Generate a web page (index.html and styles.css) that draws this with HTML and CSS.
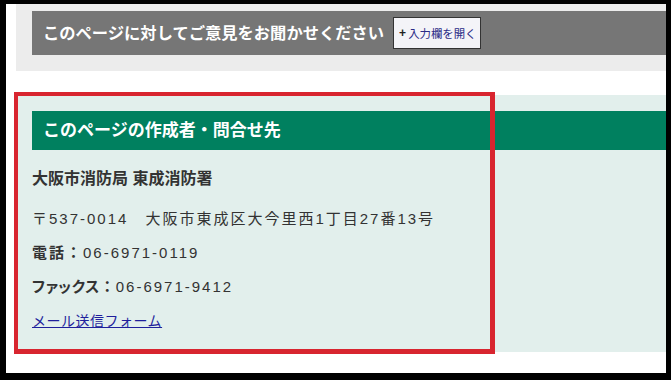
FILE: index.html
```html
<!DOCTYPE html>
<html lang="ja">
<head>
<meta charset="utf-8">
<title>このページの作成者・問合せ先</title>
<link rel="stylesheet" href="styles.css">
</head>
<body>
<div class="frame">
  <section class="feedback">
    <div class="feedback-bar">
      <h2 class="feedback-title">このページに対してご意見をお聞かせください</h2>
      <button class="open-btn" type="button"><span class="plus">+</span>入力欄を開く</button>
    </div>
  </section>

  <section class="contact">
    <h2 class="contact-head">このページの作成者・問合せ先</h2>
    <div class="contact-body">
      <p class="org">大阪市消防局 東成消防署</p>
      <p class="line">〒537-0014　大阪市東成区大今里西1丁目27番13号</p>
      <p class="line"><strong class="label">電話：</strong>06-6971-0119</p>
      <p class="line"><strong class="label"><span class="kana">ファックス</span><span class="colon">：</span></strong>06-6971-9412</p>
      <p class="line"><a class="mail" href="#">メール送信フォーム</a></p>
    </div>
  </section>

  <div class="highlight"></div>
</div>
</body>
</html>
```

FILE: styles.css
```css
html, body {
  margin: 0;
  padding: 0;
  height: 380px;
  overflow: hidden;
}

body {
  background: #000;
  font-family: "Liberation Sans", "Noto Sans CJK JP", sans-serif;
  color: #333;
}

.frame {
  position: relative;
  margin: 4px 5px 7px 6px;
  height: 369px;
  background: #fff;
  display: flex;
  flex-direction: column;
}

.feedback {
  margin-left: 10px;
  background: #ececec;
  padding: 7px 0 16px 16px;
}

.feedback-bar {
  height: 44px;
  background: #767676;
  display: flex;
  align-items: center;
  gap: 9px;
  padding-left: 11px;
}

.feedback-title {
  margin: 0;
  color: #fff;
  font-size: 16.3px;
  font-weight: bold;
  line-height: 1;
  white-space: nowrap;
}

.open-btn {
  height: 32px;
  width: 88px;
  box-sizing: border-box;
  margin: 0;
  padding: 0 0 0 5px;
  border: 1px solid #333;
  background: #f4f4f8;
  color: #2b2b86;
  font-family: "Liberation Sans", "Noto Sans CJK JP", sans-serif;
  font-size: 11.4px;
  text-align: left;
  white-space: nowrap;
  display: flex;
  align-items: center;
}

.plus {
  color: #222;
  font-weight: bold;
  font-size: 12px;
  margin-right: 2px;
}

.contact {
  margin: 24px 0 0 10px;
  height: 257px;
  box-sizing: border-box;
  background: #e2efec;
  padding: 16px 0 0 16px;
}

.contact-head {
  margin: 0;
  height: 39px;
  background: #00805f;
  color: #fff;
  font-size: 17px;
  font-weight: bold;
  line-height: 39px;
  padding-left: 11px;
}

.contact-body {
  display: flex;
  flex-direction: column;
  gap: 10px;
  padding-top: 17px;
}

.contact-body p {
  margin: 0;
  line-height: 24px;
}

.org {
  font-size: 16px;
  font-weight: bold;
  margin-bottom: 6px !important;
}

.line {
  font-size: 15px;
  letter-spacing: 2px;
}

.label {
  font-weight: bold;
}

.kana {
  font-feature-settings: "palt";
  letter-spacing: 0.5px;
}

.colon {
  letter-spacing: 1px;
}

.mail {
  color: #1f1f9c;
  font-size: 14px;
  letter-spacing: 0.5px;
  text-decoration: underline;
}

.highlight {
  position: absolute;
  left: 8px;
  top: 88px;
  width: 481px;
  height: 262px;
  box-sizing: border-box;
  border: 4px solid #d8252f;
  border-right-width: 5px;
  border-bottom-width: 5px;
  pointer-events: none;
}
```
